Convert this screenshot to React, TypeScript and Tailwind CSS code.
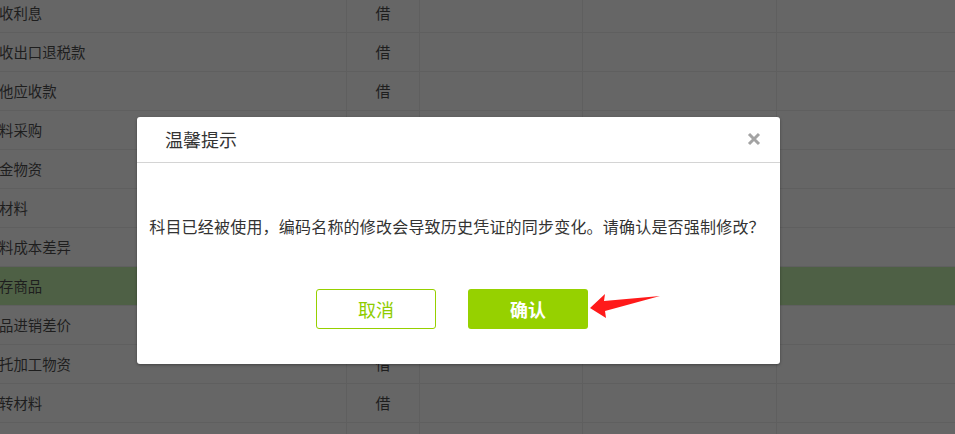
import React from 'react';

const rows = [
  { name: '收利息', dir: '借' },
  { name: '收出口退税款', dir: '借' },
  { name: '他应收款', dir: '借' },
  { name: '料采购', dir: '' },
  { name: '金物资', dir: '' },
  { name: '材料', dir: '' },
  { name: '料成本差异', dir: '' },
  { name: '存商品', dir: '', active: true },
  { name: '品进销差价', dir: '' },
  { name: '托加工物资', dir: '借' },
  { name: '转材料', dir: '借' },
  { name: '', dir: '' },
];

export default function App() {
  return (
    <div
      className="relative h-[434px] w-[955px] overflow-hidden bg-[#666666]"
      style={{ fontFamily: '"Microsoft YaHei", "Noto Sans CJK SC", "Noto Sans", sans-serif' }}
    >
      {/* Table behind the mask */}
      <div className="-mt-[6px] flex flex-col">
        {rows.map((row, i) => (
          <div
            key={i}
            className={`grid h-[39px] grid-cols-[347px_73px_163px_194px_1fr] border-b border-[#5f5f5f] text-[14.4px] text-[#1e1e1e] ${
              row.active ? 'bg-[#4e6045]' : ''
            }`}
          >
            <div className="flex items-center border-r border-[#5f5f5f] -ml-[1px]">{row.name}</div>
            <div className="flex items-center justify-center border-r border-[#5f5f5f] text-[15px]">{row.dir}</div>
            <div className="border-r border-[#5f5f5f]" />
            <div className="border-r border-[#5f5f5f]" />
            <div />
          </div>
        ))}
      </div>

      {/* Dialog */}
      <div className="absolute left-[137px] top-[117px] w-[643px] rounded-[3px] bg-white shadow-[0_1px_3px_rgba(0,0,0,0.35)]">
        <div className="flex h-[46px] items-center justify-between border-b border-[#d4d4d4] pl-[28px] pr-[19px]">
          <span className="text-[18px] text-[#333333]">温馨提示</span>
          <svg width="14" height="14" viewBox="0 0 14 14" className="mt-[-1px]">
            <path d="M2 2L12 12M12 2L2 12" stroke="#a3a3a3" strokeWidth="3" strokeLinecap="butt" />
          </svg>
        </div>
        <div className="flex flex-col items-center pb-[35px] pt-[51px]">
          <p className="pr-[3px] text-[16px] leading-[24px] tracking-[0.2px] text-[#333333]">
            科目已经被使用，编码名称的修改会导致历史凭证的同步变化。请确认是否强制修改？
          </p>
          <div className="mt-[51px] flex gap-[32px] pr-[13px]">
            <button className="h-[40px] w-[120px] rounded-[3px] border border-[#96d000] bg-white text-[18px] text-[#8fcc00]">
              取消
            </button>
            <button className="h-[40px] w-[120px] rounded-[3px] bg-[#96d100] text-[18px] font-bold text-white">
              确认
            </button>
          </div>
        </div>
      </div>

      {/* Red annotation arrow */}
      <svg className="absolute left-0 top-0" width="955" height="434" viewBox="0 0 955 434">
        <polygon
          points="590,308 605,294 604,301 660,296 605,311 606,318"
          fill="#ff1a1a"
        />
      </svg>
    </div>
  );
}
